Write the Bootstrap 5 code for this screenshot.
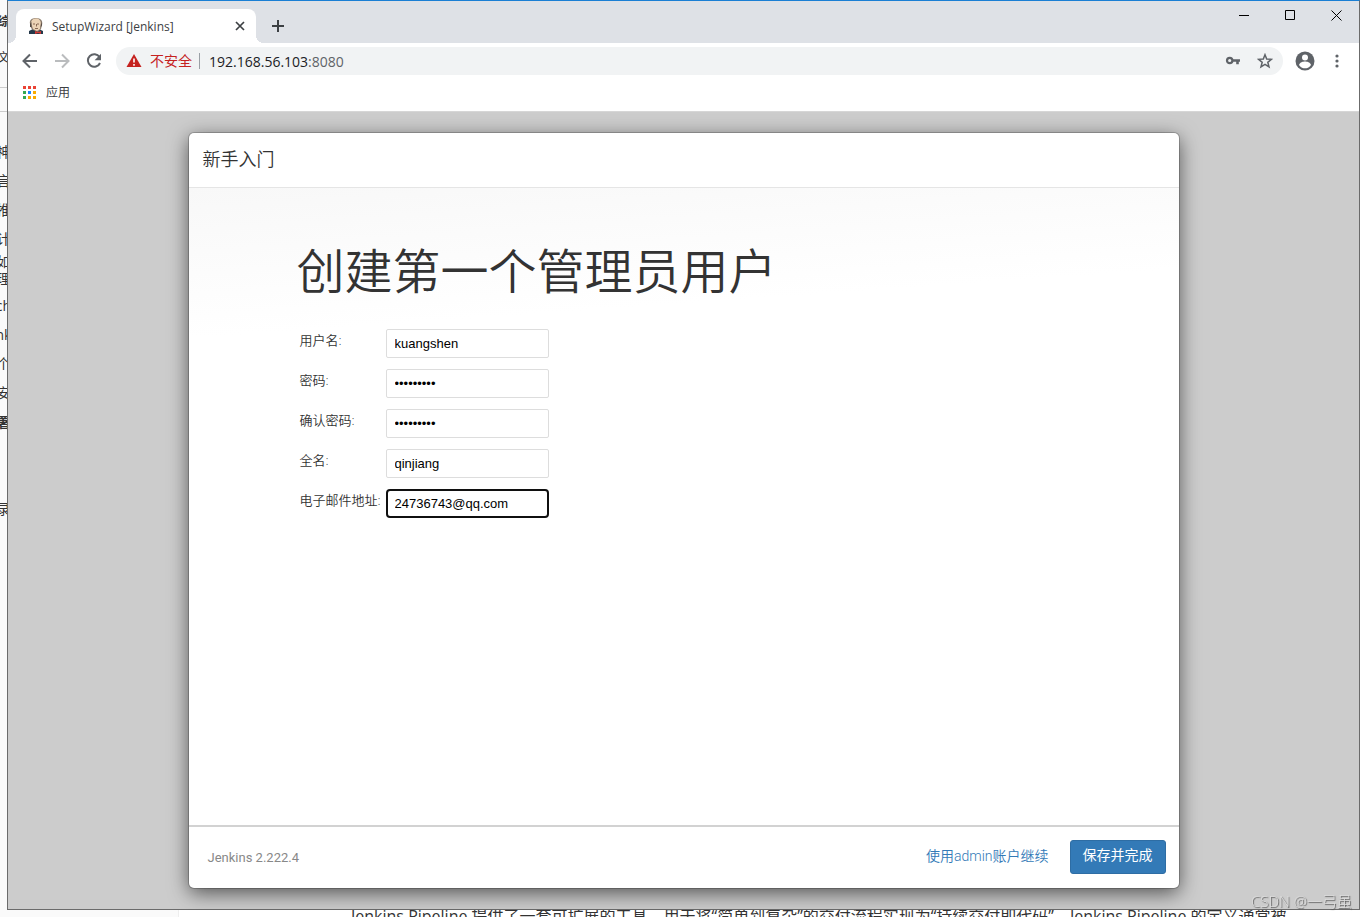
<!DOCTYPE html>
<html lang="zh-CN">
<head>
<meta charset="utf-8">
<meta name="viewport" content="width=device-width, initial-scale=1">
<title>SetupWizard [Jenkins]</title>
<link href="https://cdn.jsdelivr.net/npm/bootstrap@5.3.0/dist/css/bootstrap.min.css" rel="stylesheet">
<style>
  body { font-family: "Open Sans", "Noto Sans CJK SC", sans-serif; font-size: 13px; color: #333; background: #fff; }
  .desk-left { width: 7px; background: #fafafa; }
  .desk-left ul { font-size: 14px; line-height: 29px; }
  .desk-left li { display: flex; justify-content: center; height: 29px; white-space: nowrap; }
  .desk-left .tight { height: 17px; line-height: 17px; }
  .desk-left .top-item { height: 36px; line-height: 36px; font-size: 12px; }
  .desk-left .ruled { height: 24px; border-bottom: 1px solid #ccc; }
  .desk-left .first-rule { height: 12px; }
  .desk-left .gap-row { height: 25px; }
  .desk-left .spacer { height: 58px; }
  .desk-right { width: 7px; }
  .desk-bottom { height: 7px; line-height: 12px; font-size: 16px; }
  .desk-bottom .side { width: 179px; background: #fafafa; border-right: 1px solid #eee; }
  .desk-bottom p { padding-left: 172px; white-space: nowrap; }
  .browser { border: 1px solid #6b6b6b; border-top-color: #1a7fd4; min-width: 0; }
  .tabstrip { height: 42px; background: #dee1e6; padding-left: 8px; }
  .browser-tab { position: relative; width: 240px; height: 34px; background: #fff; border-radius: 8px 8px 0 0; padding: 0 10px 0 12px; font-size: 12px; color: #3c4043; }
  .browser-tab::before, .browser-tab::after { content: ""; position: absolute; bottom: 0; width: 8px; height: 8px; }
  .browser-tab::before { left: -8px; background: radial-gradient(circle at 0 0, transparent 8px, #fff 8px); }
  .browser-tab::after { right: -8px; background: radial-gradient(circle at 100% 0, transparent 8px, #fff 8px); }
  .tab-title { padding-top: 2px; }
  .bare { border: 0; background: none; padding: 0; display: flex; align-items: center; justify-content: center; color: #5f6368; }
  .win-btn { width: 46px; height: 28px; color: #000; }
  .toolbar { height: 36px; padding: 0 6px; }
  .tool-btn { width: 32px; height: 32px; }
  .omnibox { height: 28px; border-radius: 14px; background: #f1f3f4; font-size: 14px; padding: 0 2px 0 10px; margin: 0 6px; }
  .omnibox .warn { color: #c5221f; padding-right: 7px; margin-left: 8px; border-right: 1px solid #9aa0a6; line-height: 16px; }
  .omnibox .url { margin-left: 9px; }
  .url-host { color: #202124; }
  .url-port { color: #5f6368; }
  .bookmarks { height: 33px; padding: 0 14px 4px; font-size: 12px; border-bottom: 1px solid #d6d6d6; }
  .bookmarks a { color: #3c4043; }
  .bookmarks svg { margin-right: 9px; }
  .page-area { background: #ccc; padding: 21px 24px; }
  .wizard { max-width: 990px; width: 100%; background: #fff; border-radius: 5px; box-shadow: 0 0 0 1px rgba(0,0,0,.2), 0 5px 20px rgba(0,0,0,.6); }
  .wizard-head { height: 55px; padding: 0 14px; border-bottom: 1px solid #e5e5e5; }
  .wizard-head h2 { font-size: 18px; font-weight: 350; }
  .wizard-body { padding: 54px 108px; background: linear-gradient(176deg, #f8f8f8, #fff 150px); }
  .wizard-body h1 { font-size: 48px; line-height: 58px; font-weight: 350; margin-bottom: 29px; }
  .field-row { height: 40px; padding-left: 3px; }
  .field-row label { width: 86px; line-height: 22px; font-weight: 350; white-space: nowrap; }
  .field-row input { width: 163px; height: 29px; font: 13px "Liberation Sans", Arial, sans-serif; color: #000; border: 1px solid #ddd; border-radius: 2px; padding: 0 8px; }
  .field-row input.active-field { border: 2px solid #101010; border-radius: 4px; padding: 0 7px; outline: 0; }
  .wizard-foot { height: 63px; border-top: 2px solid #d2d2d2; padding: 0 13px 2px 19px; }
  .version { font-family: Roboto, sans-serif; color: #888; padding-top: 2px; }
  .wizard-foot a { color: #337ab7; font-family: Roboto, "Noto Sans CJK SC", sans-serif; font-size: 14px; font-weight: 350; margin-right: 21px; }
  .save-btn { height: 34px; width: 96px; font-size: 14px; line-height: 18px; padding: 0 0 3px; border-radius: 3px; --bs-btn-bg: #337ab7; --bs-btn-border-color: #2e6da4; }
  .watermark { position: fixed; right: 15px; bottom: 6px; font-size: 15px; font-weight: 300; line-height: 20px; color: #ddd; text-shadow: 1px 1px 1px #555; }
</style>
</head>
<body class="vh-100 d-flex flex-column overflow-hidden">
  <div class="d-flex flex-fill overflow-hidden">
    <aside class="desk-left flex-shrink-0 overflow-hidden">
      <ul class="list-unstyled mb-0">
        <li class="top-item mt-1 fw-bold">综</li>
        <li class="top-item">文</li>
        <li class="ruled first-rule"></li>
        <li class="ruled"></li>
        <li class="gap-row"></li>
        <li>神</li><li>言</li><li>推</li><li>计</li>
        <li class="tight">如</li><li class="tight">理</li>
        <li class="mt-1">ch</li><li>nk</li><li>个</li><li>安</li>
        <li class="fw-bold">署</li>
        <li class="spacer"></li>
        <li>录</li>
      </ul>
    </aside>
    <main class="browser flex-fill d-flex flex-column">
      <header class="tabstrip d-flex align-items-end">
        <div class="browser-tab d-flex align-items-center">
          <svg width="16" height="16" viewBox="0 0 16 16" aria-hidden="true">
            <path d="M1 16v-3l4-2h6l4 2v3z" fill="#24394a"/>
            <path d="M2 6C1 2 4 0 8 0c5 0 7 3 6 7l-1 4-3 3-5-2-2-2z" fill="#8a7b6c"/>
            <path d="M3 6C3 2 5 .5 8 .5s5 2 5 5.500l-1 5-3 2-4-2-1-3z" fill="#ecd3b5"/>
            <path d="M2 6l1.500-2v5L2 9zM13 4l1 3-1.500 3z" fill="#51463f"/>
            <path d="M5 6h2M9 6h2M8.500 6v2.500M7 10.500h3" stroke="#8a6a54" fill="none"/>
            <path d="M7 13l3 1 3-1v3l-3-1-3 1z" fill="#d33833"/>
          </svg>
          <span class="tab-title flex-fill ms-2">SetupWizard [Jenkins]</span>
          <button class="bare" aria-label="关闭标签页"><svg width="12" height="12" viewBox="0 0 12 12"><path d="M2 2l8 8M10 2l-8 8" stroke="#3c4043" stroke-width="1.700"/></svg></button>
        </div>
        <button class="bare ms-3 mb-2" aria-label="新标签页"><svg width="12" height="18" viewBox="0 0 12 18"><path d="M6 3v12M0 9h12" stroke="#3c4043" stroke-width="2"/></svg></button>
        <div class="d-flex ms-auto align-self-start">
          <button class="bare win-btn" aria-label="最小化"><svg width="10" height="10"><path d="M0 5.500h10" stroke="#000"/></svg></button>
          <button class="bare win-btn" aria-label="最大化"><svg width="10" height="10"><path d="M.5.5h9v9h-9z" fill="none" stroke="#000"/></svg></button>
          <button class="bare win-btn" aria-label="关闭"><svg width="11" height="11"><path d="M.5.5l10 10M10.500.5l-10 10" stroke="#000"/></svg></button>
        </div>
      </header>
      <nav class="toolbar d-flex align-items-center" aria-label="工具栏">
        <button class="bare tool-btn" aria-label="后退"><svg width="16" height="16" viewBox="0 0 16 16"><path d="M15 8H2M8 1.500L1.500 8 8 14.500" fill="none" stroke="#5f6368" stroke-width="2"/></svg></button>
        <button class="bare tool-btn" aria-label="前进"><svg width="16" height="16" viewBox="0 0 16 16"><path d="M1 8h13M8 1.500L14.500 8 8 14.500" fill="none" stroke="#babcbe" stroke-width="2"/></svg></button>
        <button class="bare tool-btn" aria-label="重新加载"><svg width="16" height="16" viewBox="0 0 16 16"><path d="M13.500 4A6.300 6.300 0 1 0 14 10" fill="none" stroke="#5f6368" stroke-width="2"/><path d="M15 .8v6.400H8.600z" fill="#5f6368"/></svg></button>
        <div class="omnibox flex-fill d-flex align-items-center">
          <svg class="flex-shrink-0" width="16" height="16" viewBox="0 0 16 16" aria-hidden="true"><path d="M8 1l7.500 13H.5z" fill="#c5221f"/><path d="M8 5.500v4M8 11v1.700" stroke="#fff" stroke-width="1.600"/></svg>
          <span class="warn">不安全</span>
          <span class="url flex-fill"><span class="url-host">192.168.56.103</span><span class="url-port">:8080</span></span>
          <button class="bare tool-btn" aria-label="密码"><svg width="16" height="16" viewBox="0 0 16 16"><circle cx="4.700" cy="7.500" r="2.700" fill="none" stroke="#5f6368" stroke-width="2.200"/><path d="M7 6.200h8v2.600h-1.200v2.400h-2.600V8.800H7z" fill="#5f6368"/></svg></button>
          <button class="bare tool-btn" aria-label="添加书签"><svg width="16" height="16" viewBox="0 0 16 16"><path d="M8 1.700l1.700 4.300 4.700.3-3.600 3 1.200 4.600L8 11.400l-4 2.500 1.200-4.600-3.600-3L6.300 6z" fill="none" stroke="#5f6368" stroke-width="1.500"/></svg></button>
        </div>
        <button class="bare tool-btn" aria-label="用户"><svg width="20" height="20" viewBox="0 0 20 20"><circle cx="10" cy="10" r="9.500" fill="#5f6368"/><circle cx="10" cy="6.500" r="3" fill="#fff"/><path d="M4 14c1-3 4-3.500 6-3.500s5 .5 6 3.500c-2 3-4 3.300-6 3.300S6 17 4 14z" fill="#fff"/></svg></button>
        <button class="bare tool-btn" aria-label="菜单"><svg width="4" height="14" viewBox="0 0 4 14" fill="#5f6368"><circle cx="2" cy="2" r="1.600"/><circle cx="2" cy="7" r="1.600"/><circle cx="2" cy="12" r="1.600"/></svg></button>
      </nav>
      <div class="bookmarks d-flex align-items-center">
        <a href="#" class="d-flex align-items-center text-decoration-none">
          <svg width="15" height="14" viewBox="0 0 15 14" aria-hidden="true"><path d="M1 0h3v3H1zM6 0h3v3H6zM11 0h3v3h-3z" fill="#ea4335"/><path d="M1 5h3v3H1zM1 10h3v3H1z" fill="#34a853"/><path d="M6 5h3v3H6z" fill="#1a85ff"/><path d="M11 5h3v3h-3zM6 10h3v3H6zM11 10h3v3h-3z" fill="#f9ab00"/></svg>
          应用
        </a>
      </div>
      <div class="page-area flex-fill d-flex justify-content-center">
        <form class="wizard d-flex flex-column overflow-hidden" onsubmit="return false">
          <div class="wizard-head d-flex align-items-center"><h2 class="mb-0">新手入门</h2></div>
          <div class="wizard-body flex-fill">
            <h1>创建第一个管理员用户</h1>
            <div class="field-row d-flex align-items-start"><label for="user">用户名:</label><input id="user" type="text" value="kuangshen"></div>
            <div class="field-row d-flex align-items-start"><label for="pw1">密码:</label><input id="pw1" type="password" value="123456789"></div>
            <div class="field-row d-flex align-items-start"><label for="pw2">确认密码:</label><input id="pw2" type="password" value="123456789"></div>
            <div class="field-row d-flex align-items-start"><label for="full">全名:</label><input id="full" type="text" value="qinjiang"></div>
            <div class="field-row d-flex align-items-start"><label for="mail">电子邮件地址:</label><input id="mail" class="active-field" type="text" value="24736743@qq.com"></div>
          </div>
          <div class="wizard-foot d-flex align-items-center">
            <span class="version me-auto">Jenkins 2.222.4</span>
            <a href="#" class="text-decoration-none">使用admin账户继续</a>
            <button type="submit" class="btn btn-primary save-btn">保存并完成</button>
          </div>
        </form>
      </div>
    </main>
    <div class="desk-right flex-shrink-0"></div>
  </div>
  <footer class="desk-bottom d-flex flex-shrink-0 overflow-hidden">
    <div class="side flex-shrink-0"></div>
    <p class="mb-0">Jenkins Pipeline 提供了一套可扩展的工具，用于将“简单到复杂”的交付流程实现为“持续交付即代码”。Jenkins Pipeline 的定义通常被</p>
  </footer>
  <div class="watermark">CSDN @一弓虽</div>
<script src="https://cdn.jsdelivr.net/npm/bootstrap@5.3.0/dist/js/bootstrap.bundle.min.js"></script>
</body>
</html>
